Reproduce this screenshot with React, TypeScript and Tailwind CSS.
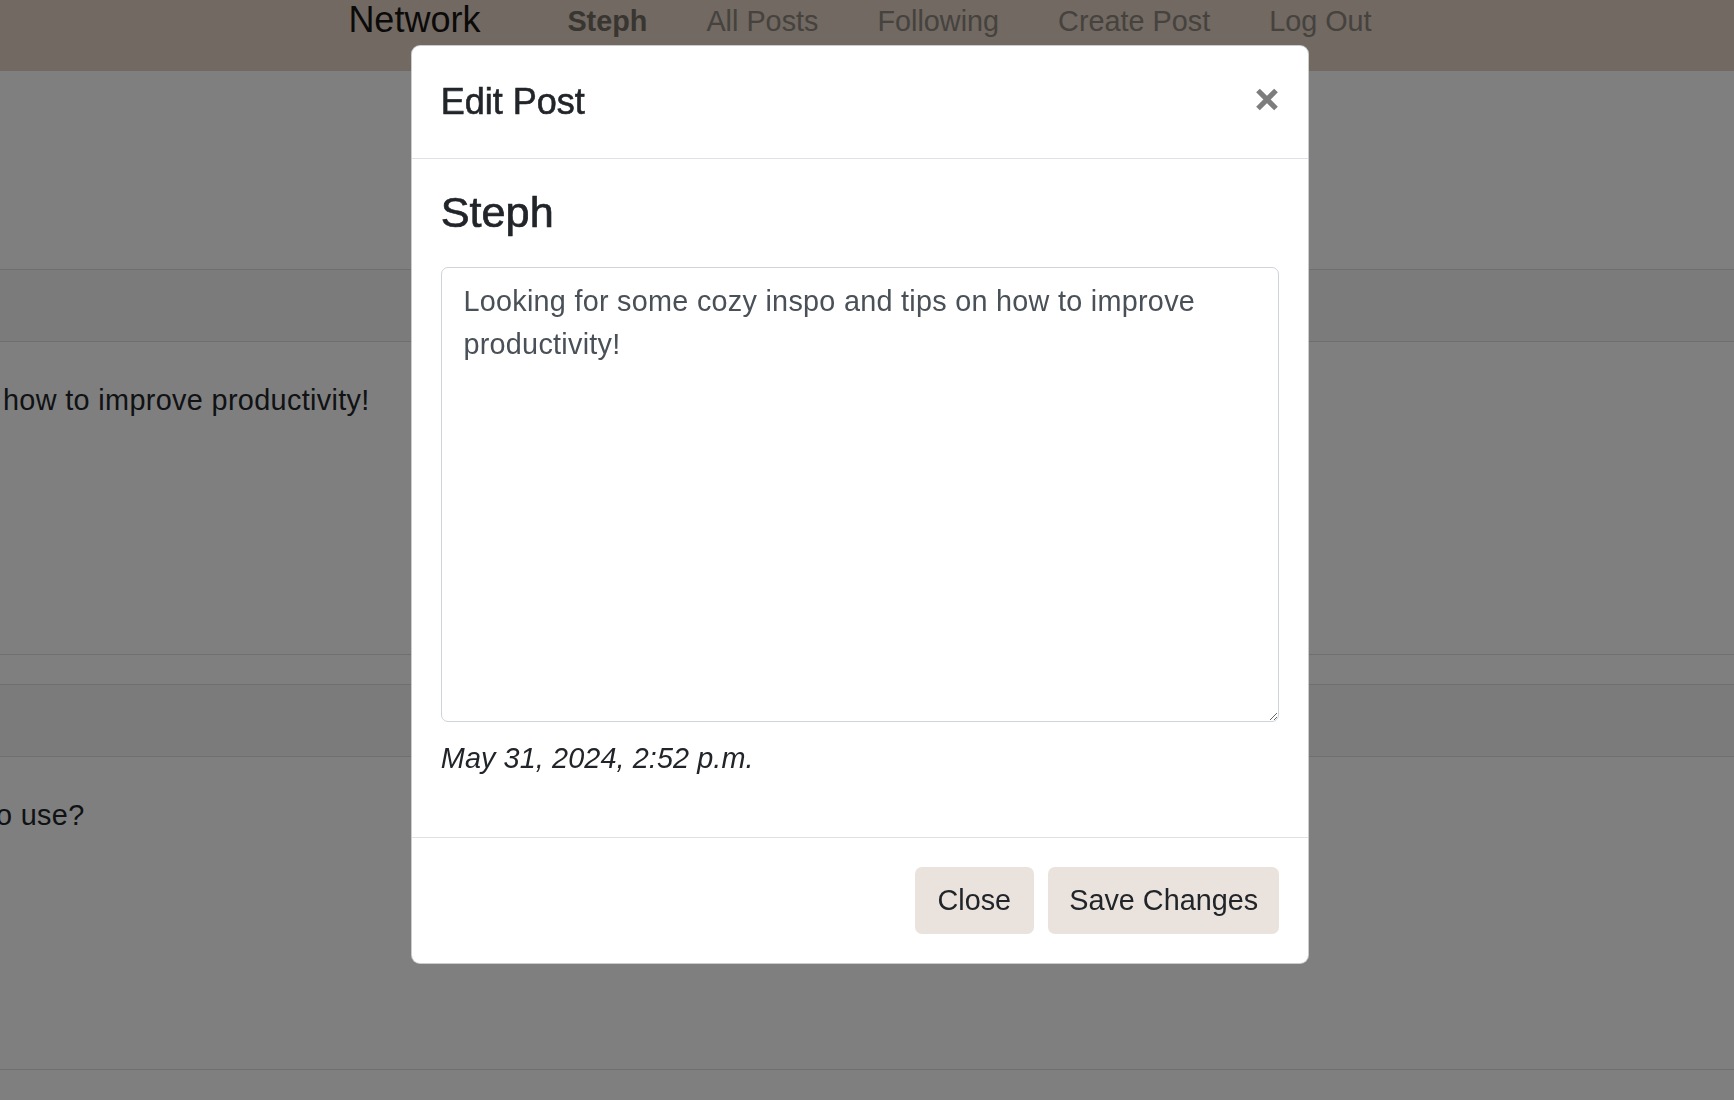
import React from "react";

function PostCard({ children }: { children: React.ReactNode }) {
  return (
    <div className="border-y border-[#dfdfdf] bg-white">
      <div className="h-[72px] bg-[#f7f7f7] border-b border-[#dfdfdf]" />
      <div className="h-[312px] pt-[37px] text-[28.8px] leading-[43.2px] tracking-[0.35px] text-[#212529] whitespace-nowrap">
        {children}
      </div>
    </div>
  );
}

export default function App() {
  return (
    <div className="relative h-[1100px] overflow-hidden bg-white font-['Liberation_Sans',Arial,sans-serif] text-[#212529]">
      {/* Navbar */}
      <nav className="h-[71px] bg-[#e2d3c5] flex justify-center pr-[14px]">
        <div className="flex items-start">
          <span className="text-[36px] leading-[40px] text-[#171513]">Network</span>
          <ul className="flex gap-[59px] ml-[87px] pt-[3px] text-[28.8px] leading-[36px]">
            <li className="font-bold text-[#736b63]">Steph</li>
            <li className="text-[#8c847c]">All Posts</li>
            <li className="text-[#8c847c]">Following</li>
            <li className="text-[#8c847c]">Create Post</li>
            <li className="text-[#8c847c]">Log Out</li>
          </ul>
        </div>
      </nav>

      {/* Page content behind the modal */}
      <div className="h-[198px]" />
      <PostCard>
        <span className="pl-[3px]">how to improve productivity!</span>
      </PostCard>
      <div className="h-[29px]" />
      <PostCard>
        <span className="block -ml-[4px]">o use?</span>
      </PostCard>

      {/* Modal */}
      <div className="fixed inset-0 bg-black/50 flex justify-center items-start pr-[14px]">
        <div className="mt-[45px] w-[898px] bg-white rounded-[9px] border border-black/20 overflow-hidden">
          <div className="flex items-start justify-between px-[28.8px] py-[28.8px] border-b border-[#dee2e6]">
            <h5 className="text-[36px] leading-[54px] font-medium text-[#212529] [-webkit-text-stroke:0.6px_#212529]">Edit Post</h5>
            <button className="mt-[13px]" aria-label="Close">
              <svg width="24" height="23" viewBox="0 0 24 23">
                <path d="M3 2.5 L21 20.5 M21 2.5 L3 20.5" stroke="#7d7d7d" strokeWidth="5.2" strokeLinecap="butt" />
              </svg>
            </button>
          </div>
          <div className="px-[28.8px] pt-[28px] pb-[28.8px]">
            <h4 className="text-[43.2px] leading-[51.84px] font-medium mb-[28.8px] text-[#212529] [-webkit-text-stroke:0.7px_#212529]">Steph</h4>
            <textarea
              className="block w-full h-[455px] border border-[#ced4da] rounded-[7px] px-[21.6px] py-[11.5px] text-[28.8px] leading-[43.2px] tracking-[0.27px] text-[#495057] bg-white outline-none"
              defaultValue="Looking for some cozy inspo and tips on how to improve productivity!"
            />
            <p className="mt-[14.4px] mb-[28.8px] italic text-[28.8px] leading-[43.2px] tracking-[0.1px] text-[#212529]">
              May 31, 2024, 2:52 p.m.
            </p>
          </div>
          <div className="flex justify-end gap-[14.4px] p-[28.8px] border-t border-[#dee2e6]">
            <button className="w-[119px] h-[67px] rounded-[7px] bg-[#eae2dc] text-[28.8px] text-[#212529]">Close</button>
            <button className="w-[231px] h-[67px] rounded-[7px] bg-[#eae2dc] text-[28.8px] text-[#212529]">Save Changes</button>
          </div>
        </div>
      </div>
    </div>
  );
}
